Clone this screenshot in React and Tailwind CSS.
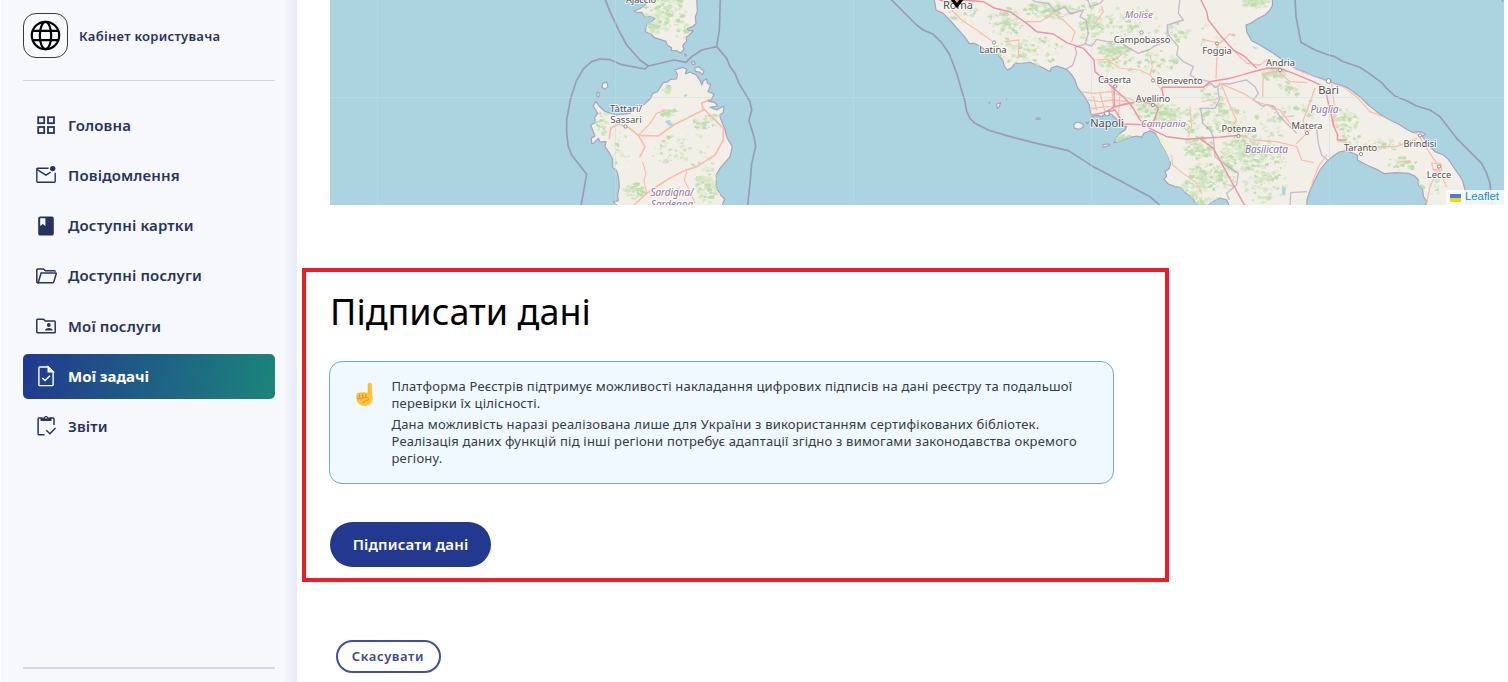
import React from "react";

/* ---------- sidebar icons ---------- */

function Icon({ children, width = 1.5 }) {
  return (
    <svg
      className="-mt-[1.5px] h-6 w-6 shrink-0"
      viewBox="0 0 24 24"
      fill="none"
      stroke="currentColor"
      strokeWidth={width}
    >
      {children}
    </svg>
  );
}

const GridIcon = () => (
  <Icon width={1.8}>
    <rect x="4.2" y="4.2" width="6" height="6" />
    <rect x="14" y="4.2" width="6" height="6" />
    <rect x="4.2" y="14" width="6" height="6" />
    <rect x="14" y="14" width="6" height="6" />
  </Icon>
);

const MailIcon = () => (
  <Icon width={1.4}>
    <path d="M14.6 5.2H3.700a.9.900 0 0 0-.9.900v12.200c0 .5.400.900.9.900h16.600c.5 0 .9-.4.9-.9V9.800" />
    <path d="M3.200 6.600l8.800 5.600 4.600-3" />
    <circle cx="18.700" cy="5.600" r="2.700" fill="currentColor" stroke="none" />
  </Icon>
);

const BookIcon = () => (
  <Icon>
    <path
      fill="currentColor"
      stroke="none"
      fillRule="evenodd"
      d="M6.100 2.600h11.800a1.900 1.900 0 0 1 1.900 1.900v15.200a1.900 1.900 0 0 1-1.900 1.900H6.100a1.900 1.900 0 0 1-1.900-1.900V4.500a1.900 1.900 0 0 1 1.900-1.900zM6.200 4.300v7.600l2.600-1.800 2.600 1.800V4.300z"
    />
  </Icon>
);

const FolderOpenIcon = () => (
  <Icon width={1.5}>
    <path d="M5 18.800H3.700a.9.900 0 0 1-.9-.9V5.800c0-.5.400-.9.900-.9h5.800l1.900 1.900h9c.5 0 .9.400.9.900" />
    <path d="M4.200 18.800L7.100 9h14.600c.4 0 .7.400.5.800l-2.500 8.300c-.1.400-.5.700-.9.700z" />
  </Icon>
);

const FolderUserIcon = () => (
  <Icon width={1.5}>
    <path d="M3.700 5.200h5.800l1.900 1.900h8.900c.5 0 .9.400.9.900v9.900c0 .5-.4.900-.9.900H3.700a.9.900 0 0 1-.9-.9V6.100c0-.5.400-.9.900-.9z" />
    <circle cx="14.800" cy="11" r="1.900" fill="currentColor" stroke="none" />
    <path d="M11 16.600v-.7c0-1.300 2.500-2 3.800-2s3.800.7 3.800 2v.7z" fill="currentColor" stroke="none" />
  </Icon>
);

const TaskIcon = () => (
  <Icon width={1.4}>
    <path d="M14.400 3H5.800a.9.900 0 0 0-.9.900v16.800c0 .5.400.900.9.900h12.400c.5 0 .9-.4.9-.9V7.700z" />
    <path d="M14.200 3v4.900h4.900z" fill="currentColor" />
    <path d="M8.300 13.900l2.800 2.700 4.900-4.800" />
  </Icon>
);

const ReportIcon = () => (
  <Icon width={1.5}>
    <path d="M10.600 20.800H5a.9.900 0 0 1-.9-.9V5c0-.5.400-.9.900-.9h2.500M16.300 4.100h2.800c.5 0 .9.400.9.900v6" />
    <path d="M6.500 3.600h3.500c.2-1 .9-1.700 2-1.700s1.800.7 2 1.700h3.500v3.500h-11z" fill="currentColor" stroke="none" />
    <circle cx="12" cy="3.900" r=".8" fill="#f6f8fc" stroke="none" />
    <path d="M12.300 16.300l3.600 3.500 5.600-5.800" />
  </Icon>
);

const GlobeIcon = () => (
  <svg className="h-[31px] w-[31px]" viewBox="0 0 31 31" fill="none" stroke="#000" strokeWidth="2.200">
    <circle cx="15.500" cy="15.500" r="13.700" />
    <ellipse cx="15.500" cy="15.500" rx="5.700" ry="13.700" />
    <path d="M2.700 10.900h25.600M2.700 20.100h25.600" />
  </svg>
);

const NAV = [
  ["Головна", GridIcon],
  ["Повідомлення", MailIcon],
  ["Доступні картки", BookIcon],
  ["Доступні послуги", FolderOpenIcon],
  ["Мої послуги", FolderUserIcon],
  ["Мої задачі", TaskIcon],
  ["Звіти", ReportIcon],
];

function Sidebar() {
  return (
    <aside className="ml-px flex h-full w-[296px] shrink-0 flex-col bg-[linear-gradient(to_right,#f6f8fc_0,#f6f8fc_283px,#edf0f8_291px,#e9ecf6_296px)] pl-[22px] pr-[22px] text-[#26335f]">
      <div className="flex h-[80.500px] shrink-0 items-center gap-[11px] border-b-[1.500px] border-[#d3d6ea] pb-[8px]">
        <div className="flex h-[45px] w-[45px] shrink-0 items-center justify-center rounded-[13px] border border-[#3a3a3a] bg-[#f9fafc]">
          <GlobeIcon />
        </div>
        <span className="mt-[1px] whitespace-nowrap text-[13px] font-semibold tracking-[0.28px]">Кабінет користувача</span>
      </div>
      <nav className="flex flex-col gap-[5.2px] pt-[23px]">
        {NAV.map(([label, Glyph]) => {
          const active = label === "Мої задачі";
          return (
            <a
              key={label}
              className={
                active
                  ? "flex h-[45px] items-center gap-[10px] rounded-[5px] bg-[linear-gradient(100deg,#22398f,#1b857b)] pl-[11px] text-[15px] font-bold text-white"
                  : "flex h-[45px] items-center gap-[10px] pl-[11px] text-[15px] font-semibold tracking-[0.15px]"
              }
            >
              <Glyph />
              <span className="-mt-[2px] whitespace-nowrap">{label}</span>
            </a>
          );
        })}
      </nav>
      <div className="mb-[13px] mt-auto h-[2px] shrink-0 bg-[#d5d8ea]" />
    </aside>
  );
}

/* ---------- map ---------- */

/* Wooded areas: centre x, centre y, radius x, radius y, number of patches */
const WOODS = [
  [665, 12, 22, 18, 70], [654, 27, 9, 7, 16], [682, 30, 8, 12, 8],
  [668, 113, 8, 5, 12], [668, 88, 7, 4, 7], [702, 124, 12, 5, 10], [712, 120, 9, 9, 12],
  [708, 185, 12, 18, 50], [634, 191, 9, 8, 16], [604, 123, 8, 12, 12], [670, 150, 18, 16, 18],
  [618, 150, 12, 20, 12], [700, 150, 20, 20, 10],
  [1006, 22, 17, 15, 50], [1050, 10, 26, 9, 60], [1030, 50, 35, 16, 46], [1090, 22, 14, 24, 40],
  [965, 14, 16, 12, 12], [1114, 50, 16, 7, 50], [1130, 26, 30, 20, 34], [1150, 62, 28, 12, 30],
  [1110, 62, 12, 10, 14], [1145, 107, 15, 10, 34], [1167, 114, 15, 10, 55], [1118, 138, 14, 4, 20],
  [1194, 120, 12, 14, 18], [1198, 148, 15, 12, 50], [1204, 178, 18, 15, 60], [1212, 95, 13, 14, 22],
  [1190, 192, 14, 10, 28], [1224, 118, 22, 17, 44], [1244, 148, 20, 17, 60], [1228, 165, 10, 24, 45],
  [1262, 160, 24, 20, 45], [1266, 186, 22, 18, 30], [1205, 200, 12, 6, 14], [1256, 3, 14, 5, 36],
  [1274, 74, 12, 6, 32], [1290, 88, 12, 8, 12], [1308, 110, 12, 10, 14], [1346, 120, 14, 12, 28],
  [1382, 145, 18, 8, 16], [1402, 164, 14, 9, 14], [1178, 32, 12, 10, 12], [1276, 120, 20, 18, 18],
  [1430, 185, 16, 14, 10], [1216, 40, 20, 18, 8], [1350, 138, 14, 6, 10],
];

function scatterWoods() {
  let seed = 7;
  const rnd = () => {
    seed = (seed * 16807) % 2147483647;
    return seed / 2147483647;
  };
  const tones = ["#d0e4bf", "#c0ddb0", "#d9e8ca", "#e3ebd2"];
  const out = [[], [], [], []];
  WOODS.forEach(([cx, cy, rx, ry, count]) => {
    const n = Math.round(count * 2.2);
    for (let i = 0; i < n; i++) {
      const a = rnd() * Math.PI * 2;
      const r = Math.pow(rnd(), 0.7);
      const x = cx + Math.cos(a) * rx * r;
      const y = cy + Math.sin(a) * ry * r;
      const s = 0.6 + rnd() * 2.1;
      const pts = [];
      for (let k = 0; k < 8; k++) {
        const t = (k / 8) * Math.PI * 2;
        const q = s * (0.4 + rnd() * 0.9);
        pts.push((x + Math.cos(t) * q * 1.2).toFixed(1) + " " + (y + Math.sin(t) * q * 0.85).toFixed(1));
      }
      out[Math.floor(rnd() * 4)].push("M" + pts.join("L") + "Z");
    }
  });
  return [3, 2, 0, 1].map((i) => [tones[i], out[i].join("")]);
}

const PATCHES = scatterWoods();

const CORSICA =
  "M285-6L290 10 272 25 252 33 262 38 275 37 285 50 302 49 315 55 306 66 292 70 288 82 287 95 305 103 312 112 330 118 348 124 352 136 365 143 364 152 380 152 392 159 402 148 398 138 403 130 410 124 408 112 418 105 430 92 414 92 412 85 428 80 438 70 436 50 442 35 440-6Z";
const SARDINIA =
  "M205 620L190 605 205 602 203 585 208 560 205 530 200 512 188 502 188 478 180 462 165 440 168 425 150 426 145 415 130 430 125 430 124 415 135 408 130 395 122 375 136 368 134 352 143 340 130 318 137 304 147 318 165 335 200 345 240 340 262 318 280 315 302 295 308 280 322 276 340 248 352 246 362 238 380 237 382 222 375 210 398 202 410 208 406 222 420 216 440 226 452 245 455 255 460 242 470 236 472 250 482 254 474 275 492 282 484 300 470 302 495 308 503 318 480 322 500 330 522 318 520 338 508 345 514 362 524 385 530 410 538 425 547 440 540 470 510 505 500 522 498 545 500 565 512 585 524 597 515 620Z";
const ITALY =
  "M40-9L45 10 48 30 70 40 85 55 105 78 120 95 135 112 148 131 162 130 180 138 195 150 218 156 235 165 248 180 254 200 262 210 275 203 285 190 310 189 330 187 350 195 370 204 390 215 394 204 410 198 440 208 455 224 465 240 472 262 488 282 500 300 508 315 511 335 516 350 530 346 545 350 558 340 575 343 585 352 598 370 612 378 620 380 615 390 600 400 590 415 582 428 596 425 610 418 630 412 650 408 665 412 672 400 690 392 704 398 715 412 722 430 735 450 745 470 752 490 748 505 735 515 740 528 732 538 745 552 765 560 785 563 792 575 806 585 820 597 824 607 840 618 862 618 876 605 900 594 920 600 928 618 1160 620 1161 600 1170 570 1185 540 1200 510 1220 485 1240 468 1258 456 1280 452 1300 460 1313 466 1312 480 1340 495 1370 508 1393 521 1430 518 1465 520 1484 528 1495 540 1495 555 1508 568 1510 590 1520 603 1516 620 1637 620 1638 590 1634 565 1627 540 1615 522 1600 500 1585 478 1570 465 1545 455 1530 440 1515 420 1506 408 1518 403 1500 395 1480 398 1460 388 1440 375 1400 355 1370 335 1345 315 1320 290 1300 275 1280 262 1255 254 1230 246 1205 236 1180 228 1150 214 1130 208 1100 188 1060 160 1020 135 995 122 980 95 978 75 995 68 1015 55 1035 45 1050 30 1058 15 1056-9Z";

/* Place names: text, x, baseline y, size */
const CITIES = [
  ["Ajaccio", 641, 3, 9.200], ["Tàttari/", 626, 111.500, 9.500], ["Sassari", 626, 122.500, 9.500],
  ["Roma", 958, 8.500, 11], ["Latina", 993, 53, 9.500], ["Campobasso", 1142, 43.300, 9.300],
  ["Foggia", 1217, 54.300, 9.300], ["Caserta", 1114.500, 82.500, 9.300], ["Benevento", 1179.500, 84.300, 9.200],
  ["Avellino", 1153, 101.500, 9.300], ["Napoli", 1107, 127, 11], ["Potenza", 1239, 132.300, 9.300],
  ["Andria", 1280.500, 66, 9.300], ["Bari", 1328.500, 94, 11], ["Matera", 1307, 129.200, 9.300],
  ["Taranto", 1360.500, 151, 9.300], ["Brindisi", 1420, 147, 9.300], ["Lecce", 1439, 177.500, 9.300],
];
const REGIONS = [
  ["Sardigna/", 672, 196, 9.900], ["Sardegna", 672, 208, 9.900], ["Molise", 1139, 18, 9.800],
  ["Campania", 1163.500, 127, 9.800], ["Puglia", 1324.500, 113, 10], ["Basilicata", 1266.500, 152.500, 10],
];
const DOTS = [
  [625.500, 126.500], [994, 42.500], [1141.500, 32.500], [1217, 43.500], [1115, 86.500], [1153, 80.500],
  [1153, 105], [1238.500, 136], [1280, 70], [1307, 133], [1361, 154], [1420, 135.500], [1439, 166.500],
];

function MapView() {
  return (
    <div className="relative h-[205px] w-[1173.500px] overflow-hidden bg-[#abd3e0]">
      <svg className="block h-[205px] w-[1174px]" viewBox="330 0 1174 205">
        <defs>
          <clipPath id="land">
            <path d={CORSICA} transform="translate(550 0) scale(.33333)" />
            <path d={SARDINIA} transform="translate(550 0) scale(.33333)" />
            <path d={ITALY} transform="translate(920 0) scale(.33333)" />
          </clipPath>
        </defs>

        <g fill="#f2efe8" stroke="#a5a3bd" strokeWidth="3.500" strokeLinejoin="round">
          <g transform="translate(550 0) scale(.33333)">
            <path d={CORSICA} />
            <path d={SARDINIA} />
            <path d="M158 250l12-4 4 14-10 8-8-6zM142 276l6 4-2 12-6-4z" />
            <path d="M434 204l14-4 6 8 8 4-4 12-10-8-12-2zM424 186l8-2 4 8-8 2zM404 162l5 2-3 5z" />
          </g>
          <g transform="translate(920 0) scale(.33333)">
            <path d={ITALY} />
            <path d="M462 370l12-4 14 6 2 10-14 6-14-4zM548 434l18-2 4 4-20 6zM498 368l8-2-2 6z" />
            <path d="M207 304l2 8M230 312l12-4-4 12-6 6zM258 296l3 2M348 356l8-3 6 4-10 2z" />
          </g>
        </g>

        <g clipPath="url(#land)">
          {PATCHES.map(([fill, d]) => (
            <path key={fill} d={d} fill={fill} />
          ))}
          <path d="M1156 132l5 3 10 26-3 2-8-14z" fill="#eef0d0" />
          <path d="M665 121l5-1 1 3 3 1-4 2-3-2zM684 95l3-1 0 2-3 1zM973 9l3 3-1 2zM1167 24l1 8-2 4zM1147 57l3 5-2 1zM1282 186l4 2-1 8-3-2zM623 154l3-1zM1252 46l6 2-3 1z" fill="#a9d6ea" />
          <g fill="none" stroke="#b9a8c4" strokeWidth="4" opacity=".75" strokeLinejoin="round" transform="translate(920 0) scale(.33333)">
            <path d="M440 206L458 196 470 160 465 142 495 132 505 100 498 60 480 50 490 30 450 42 435 20 405 35 385 10 345 5 330-6" />
            <path d="M495 132L515 138 530 118 560 125 600 125 620 140 655 160 690 148 700 140 735 125 745 105 742 75 790 60 775 40 780-6" />
            <path d="M745 105L775 140 770 165 790 185 820 200 810 225 830 235 868 245 885 262 897 258 898 250 930 252 955 245 980 240 1005 260 1015 280 1000 300 1030 320 1040 313 1060 318 1080 350 1110 380 1130 400" />
            <path d="M893 262L898 300 885 325 842 325 848 370 870 390 880 410 885 470 925 500 955 520 950 555 920 580 928 600" />
            <path d="M1190 385L1195 430 1205 465 1225 482M1160 575L1112 578 1110 618M500-6L512 20 540 10 555-6" />
          </g>
          <g fill="none" stroke="#fbbcab" strokeWidth="3.800" strokeLinejoin="round" strokeLinecap="round">
            <g transform="translate(550 0) scale(.33333)">
              <path d="M178 415L182 385 205 372 240 385 265 406 285 440 270 470M265 406L325 408 370 375 420 350 460 330 455 310 480 298M460 325L520 385 520 420 495 465 440 500 400 513 350 540 290 580 250 617" strokeWidth="5" />
              <path d="M265 406L300 370 320 340 350 330M278 487L288 520 282 540 290 580M410 515L403 540 415 565 435 610" strokeWidth="3.500" />
            </g>
            <g transform="translate(920 0) scale(.33333)">
              <path d="M95 30L125 60 170 90 215 122M255 125L297 120 295 170M310 65L360 65 400 40 430 60 465 95 455 125M525 70L550 35 545 20" />
              <path d="M480 275L520 280 570 275 600 285 640 300M500 300L540 305 580 300 625 305M515 325L560 320 620 310M540 280L555 335M575 250L580 330M600 285L595 350M520 290L530 330" strokeWidth="3.800" />
              <path d="M530 180L560 178 600 205 660 210 690 225 705 245 725 270M690 165L697 200 690 225M620 155L580 180M755 465L758 495 790 520 830 550 845 580M810 320L815 380 805 410M845 305L900 295" strokeWidth="3.200" />
              <path d="M847 118L900 130 930 100M892 135L888 235M900 250L970 280 1010 305 1080 330 1110 370 1160 390M905 255L935 330 950 360 925 400M960 405L1000 420 1070 425 1130 440 1145 480 1180 488M1130 430L1170 390" />
              <path d="M940 150L980 190 1020 195 1040 180 1090 200M1028 290L1030 220 1075 215 1110 245 1160 248M1185 265L1165 320 1150 360 1155 395M1235 255L1245 330 1240 380M1220 465L1195 500 1180 540 1168 580 1165 618M1280 445L1360 440 1430 440 1490 415" />
              <path d="M1210 240L1270 260 1310 290 1350 335 1440 370 1495 405 1520 445 1550 490 1560 520 1580 560M1535 490L1562 490 1565 510 1540 510ZM1550 515L1530 560 1520 610M1100 190L1150 218 1200 232M1100 350L1120 348M1438 485L1470 483" />
            </g>
          </g>
          <g fill="none" stroke="#ee92a8" strokeWidth="4.400" strokeLinejoin="round" transform="translate(920 0) scale(.33333)">
            <path d="M45-6L80 8 130 0 190 5 225 25 270 35 320 70 350 95 400 102 440 128 490 145 522 180 525 215 555 240 575 260 620 300 640 325 660 360 690 385 740 410 800 418 840 415 880 445 905 490 940 555 975 618" />
            <path d="M582 260L583 320 560 335M583 320L650 305 700 310 715 325 705 355 690 385M585 330L610 372 690 375M515 345L550 338 585 330M840 415L900 412 960 405M725 262L770 262 850 262 870 245 930 235 1000 215 1040 205 1080 205 1120 220 1180 245 1215 262 1225 310 1235 350 1240 375 1253 405 1252 420 1280 420M725 262L730 290M840-6L860 35 865 60 900 105 940 150 975 170 1010 205" />
          </g>
        </g>

        <g fill="none" stroke="#9b9ab8" strokeWidth="5" strokeLinejoin="round">
          <g transform="translate(550 0) scale(.33333)">
            <path d="M165-3L180 35 205 88 230 135 270 180 295 198 372 180 408 187 425 170 455 150 500 140 508 90 511-3" />
            <path d="M295 198L285 207 212 193 180 179 150 177 125 185 100 207 78 245 72 265 62 295 50 360 50 400 55 440 65 465 110 523 93 618" />
            <path d="M500 140L530 175 540 200 555 220 567 250 600 305 605 330 597 362 612 410 617 440 605 490 602 530 593 618" />
          </g>
          <g transform="translate(920 0) scale(.33333)">
            <path d="M-88-3L-40 45-10 75 10 90 40 103 65 128 88 162 110 220 135 305 140 335 150 355 165 370 205 390 260 407 350 430 445 452 515 497 600 542 690 590 722 618" />
            <path d="M1125-3L1128 50 1143 127 1185 150 1220 163 1245 170 1270 185 1320 202 1350 222 1385 248 1400 265 1425 288 1460 302 1490 318 1530 330 1560 350 1610 415 1685 490 1700 520 1710 550 1716 618M1745-3l4 8" />
          </g>
        </g>
        <path d="M377.500 0v205M615.500 0v205M853.500 0v205M1091.500 0v205M1329.500 0v205M330 97.500h1174" stroke="#c4dfe3" strokeWidth="1" opacity=".45" />

        <g fill="#fff" stroke="#858585" strokeWidth=".9">
          {DOTS.map(([x, y]) => (
            <circle key={x + "-" + y} cx={x} cy={y} r="1.600" />
          ))}
          <circle cx="1107" cy="113.500" r="2.400" />
          <circle cx="1328.500" cy="81" r="2.400" />
        </g>

        <g textAnchor="middle" stroke="#fff" strokeOpacity=".7" strokeWidth="2.200" strokeLinejoin="round" paintOrder="stroke">
          {CITIES.map(([t, x, y, s]) => (
            <text key={t} x={x} y={y} fontSize={s} fill="#4f4f4f">{t}</text>
          ))}
          {REGIONS.map(([t, x, y, s]) => (
            <text key={t} x={x} y={y} fontSize={s} fill="#9474a2" fontStyle="italic">{t}</text>
          ))}
        </g>
        <path d="M950.500-3L957 5.500 963.500-3" fill="none" stroke="#000" strokeWidth="3.200" />
      </svg>
      <div className="absolute bottom-0 right-0 flex h-[15px] w-[57.500px] items-center gap-[4px] bg-white/80 pl-[4px] text-[11.500px] text-[#2a8cb5] [font-family:'Liberation_Sans',Arial,sans-serif]">
        <svg className="h-[8px] w-[11px] shrink-0" viewBox="0 0 11 8">
          <path d="M0 0h11v4H0z" fill="#4c7be1" />
          <path d="M0 4h11v4H0z" fill="#ffd500" />
        </svg>
        <span className="-mt-px tracking-[-0.1px]">Leaflet</span>
      </div>
    </div>
  );
}

/* ---------- signing ---------- */

const PointingHand = () => (
  <svg className="mt-[20.500px] h-[25px] w-[19px] shrink-0" viewBox="0 0 20 26">
    <path
      d="M13.300 2.800c0-1.300.8-2.100 2.200-2.100s2.400.9 2.400 2.300v9.400c.5 1.300.9 3.200.7 5.200-.3 4.400-3.200 7.400-8.100 7.400-5 0-8.300-2.500-8.800-6.800-.4-.8-.4-4.300-.1-5.600.3-1.100 1.700-1.500 2.700-.8.3-1.300 2.600-1.800 3.500-.5.7-1.100 2.900-1.100 3.500.2.500-.5 1.300-.5 2-.1z"
      fill="#ffc440"
    />
    <path d="M4.500 12.600v4.600M8 12v4.600M11.400 12v3.500M2 16.600c.5 1.300 2.100 1.300 2.600.3.600 1.100 2.700 1 3.300-.3M7.800 17c1.400-1.300 4.200-1.300 5.600-.4 1.500 1 1.200 2.400-.6 2.500-2.300.1-3.200.9-3.900 2.600" fill="none" stroke="#dd8f22" strokeWidth="1" strokeLinecap="round" />
    <path d="M14.300 3v8.800" stroke="#f8b12d" strokeWidth="1" />
  </svg>
);

function SignPanel() {
  return (
    <section className="ml-[5px] mt-[63px] flex h-[314px] w-[867px] flex-col items-start border-4 border-[#ee1c25] pl-[24px]">
      <h1 className="mt-[13px] whitespace-nowrap text-[36px] leading-[54px] text-black">Підписати дані</h1>
      <div className="-ml-px mt-[21.500px] flex h-[123.500px] w-[784.500px] rounded-[13px] border border-[#71aac3] bg-[#f0f9ff] pl-[25px]">
        <PointingHand />
        <div className="ml-[17.500px] mt-[16px] text-[13px] leading-[17px] tracking-[0.2px] text-[#333b45]">
          <p className="whitespace-nowrap">
            Платформа Реєстрів підтримує можливості накладання цифрових підписів на дані реєстру та подальшої
            <br />
            перевірки їх цілісності.
          </p>
          <p className="mt-[4.500px] whitespace-nowrap">
            Дана можливість наразі реалізована лише для України з використанням сертифікованих бібліотек.
            <br />
            Реалізація даних функцій під інші регіони потребує адаптації згідно з вимогами законодавства окремого
            <br />
            регіону.
          </p>
        </div>
      </div>
      <button className="mt-[38px] flex h-[44.500px] w-[161px] items-center justify-center whitespace-nowrap rounded-full bg-[#22398f] text-[15px] font-semibold tracking-[0.15px] text-white">
        Підписати дані
      </button>
    </section>
  );
}

export default function App() {
  return (
    <div className="flex h-[682px] w-[1508px] overflow-hidden bg-white [font-family:'Noto_Sans','Open_Sans',sans-serif]">
      <Sidebar />
      <main className="flex min-w-0 flex-1 flex-col">
        <div className="pl-[33px]">
          <MapView />
        </div>
        <SignPanel />
        <button className="ml-[38.500px] mt-[58px] flex h-[33px] w-[105px] shrink-0 items-center justify-center whitespace-nowrap rounded-full border-2 border-[#3d509f] text-[13px] font-semibold tracking-[0.6px] text-[#3a4c8c]">
          Скасувати
        </button>
      </main>
    </div>
  );
}
